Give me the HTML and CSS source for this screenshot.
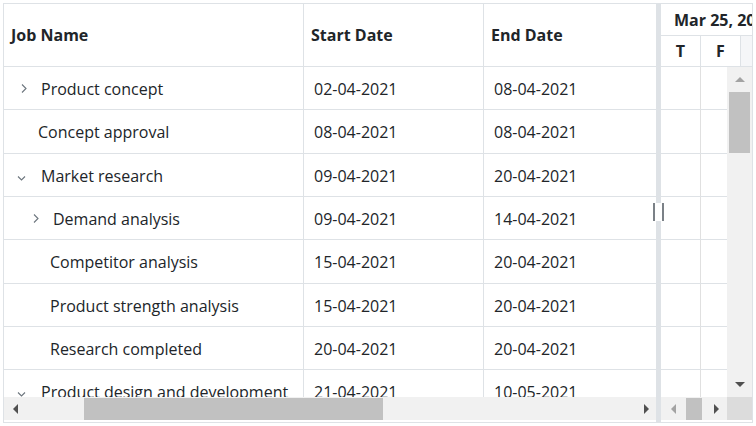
FILE: index.html
```html
<!DOCTYPE html>
<html lang="en">
<head>
<meta charset="utf-8">
<title>Gantt</title>
<link rel="stylesheet" href="styles.css">
</head>
<body>
<div class="gantt">
  <div class="grid-pane">
    <div class="grid-header">
      <div class="hcell col-name">Job Name</div>
      <div class="hcell col-start">Start Date</div>
      <div class="hcell col-end">End Date</div>
    </div>
    <div class="grid-body">
      <div class="row">
        <div class="cell col-name"><span class="exp"><svg width="16" height="16" viewBox="0 0 16 16"><polyline class="chev" points="7,3.5 11,7.5 7,11.5"/></svg></span><span>Product concept</span></div>
        <div class="cell col-start">02-04-2021</div>
        <div class="cell col-end">08-04-2021</div>
      </div>
      <div class="row">
        <div class="cell col-name"><span class="leaf"></span><span>Concept approval</span></div>
        <div class="cell col-start">08-04-2021</div>
        <div class="cell col-end">08-04-2021</div>
      </div>
      <div class="row">
        <div class="cell col-name"><span class="exp"><svg width="16" height="16" viewBox="0 0 16 16"><polyline class="chev" points="3,8.5 6.5,12 10,8.5"/></svg></span><span>Market research</span></div>
        <div class="cell col-start">09-04-2021</div>
        <div class="cell col-end">20-04-2021</div>
      </div>
      <div class="row">
        <div class="cell col-name"><span class="exp lvl1"><svg width="16" height="16" viewBox="0 0 16 16"><polyline class="chev" points="7,3.5 11,7.5 7,11.5"/></svg></span><span>Demand analysis</span></div>
        <div class="cell col-start">09-04-2021</div>
        <div class="cell col-end">14-04-2021</div>
      </div>
      <div class="row">
        <div class="cell col-name"><span class="leaf lvl1"></span><span>Competitor analysis</span></div>
        <div class="cell col-start">15-04-2021</div>
        <div class="cell col-end">20-04-2021</div>
      </div>
      <div class="row">
        <div class="cell col-name"><span class="leaf lvl1"></span><span>Product strength analysis</span></div>
        <div class="cell col-start">15-04-2021</div>
        <div class="cell col-end">20-04-2021</div>
      </div>
      <div class="row">
        <div class="cell col-name"><span class="leaf lvl1"></span><span>Research completed</span></div>
        <div class="cell col-start">20-04-2021</div>
        <div class="cell col-end">20-04-2021</div>
      </div>
      <div class="row">
        <div class="cell col-name"><span class="exp"><svg width="16" height="16" viewBox="0 0 16 16"><polyline class="chev" points="3,8.5 6.5,12 10,8.5"/></svg></span><span>Product design and development</span></div>
        <div class="cell col-start">21-04-2021</div>
        <div class="cell col-end">10-05-2021</div>
      </div>
    </div>
    <div class="hscroll">
      <div class="sbtn btn-l"><span class="tri tri-left dark"></span></div>
      <div class="hthumb grid-thumb"></div>
      <div class="sfill"></div>
      <div class="sbtn btn-r"><span class="tri tri-right dark"></span></div>
    </div>
  </div>

  <div class="splitter"><div class="handle"></div></div>

  <div class="chart-pane">
    <div class="chart-header">
      <div class="tl-top">Mar 25, 2021</div>
      <div class="tl-days">
        <div class="day">T</div>
        <div class="day">F</div>
        <div class="day weekend">S</div>
      </div>
    </div>
    <div class="chart-main">
      <div class="chart-body">
        <div class="crow"><div class="ccell"></div><div class="ccell"></div><div class="ccell"></div></div>
        <div class="crow"><div class="ccell"></div><div class="ccell"></div><div class="ccell"></div></div>
        <div class="crow"><div class="ccell"></div><div class="ccell"></div><div class="ccell"></div></div>
        <div class="crow"><div class="ccell"></div><div class="ccell"></div><div class="ccell"></div></div>
        <div class="crow"><div class="ccell"></div><div class="ccell"></div><div class="ccell"></div></div>
        <div class="crow"><div class="ccell"></div><div class="ccell"></div><div class="ccell"></div></div>
        <div class="crow"><div class="ccell"></div><div class="ccell"></div><div class="ccell"></div></div>
        <div class="crow"><div class="ccell"></div><div class="ccell"></div><div class="ccell"></div></div>
      </div>
      <div class="vscroll">
        <div class="vbtn"><span class="tri tri-up light"></span></div>
        <div class="vthumb"></div>
        <div class="sfill"></div>
        <div class="vbtn"><span class="tri tri-down dark"></span></div>
      </div>
    </div>
    <div class="chart-bottom">
      <div class="hscroll chart-hscroll">
        <div class="sbtn cbtn-l"><span class="tri tri-left light"></span></div>
        <div class="hthumb chart-thumb"></div>
        <div class="sfill"></div>
        <div class="sbtn cbtn-r"><span class="tri tri-right dark"></span></div>
      </div>
      <div class="corner"></div>
    </div>
  </div>
</div>
</body>
</html>
```

FILE: styles.css
```css
html, body {
  background: #ffffff;
}

body {
  margin: 3px;
  font-family: "Open Sans", "Segoe UI", sans-serif;
  font-size: 16px;
  color: #212529;
}

.gantt {
  display: flex;
  width: 750px;
  height: 420px;
  box-sizing: border-box;
  border: 1px solid #dee2e6;
  overflow: hidden;
}

/* ---------- grid side ---------- */
.grid-pane {
  width: 652px;
  flex: none;
  display: flex;
  flex-direction: column;
}

.grid-header {
  display: flex;
  height: 63px;
  flex: none;
  box-sizing: border-box;
  border-bottom: 1px solid #dee2e6;
}

.hcell {
  display: flex;
  align-items: center;
  box-sizing: border-box;
  padding-left: 7px;
  font-weight: 700;
  border-right: 1px solid #dee2e6;
  white-space: nowrap;
}

.col-name { width: 300px; flex: none; }
.col-start { width: 180px; flex: none; }
.col-end { width: 172px; flex: none; border-right: none; }

.grid-body {
  height: 330px;
  flex: none;
  overflow: hidden;
}

.row {
  display: flex;
  height: 43.34px;
  box-sizing: border-box;
  border-bottom: 1px solid #dee2e6;
}

.cell {
  display: flex;
  align-items: center;
  box-sizing: border-box;
  padding-left: 10px;
  padding-top: 2px;
  border-right: 1px solid #dee2e6;
  white-space: nowrap;
  overflow: hidden;
}

.cell.col-end { border-right: none; }
.cell.col-name { padding-left: 7px; }

.exp {
  width: 30px;
  flex: none;
  display: flex;
  align-items: center;
}

.exp svg {
  margin-left: 4px;
  display: block;
}

.leaf {
  width: 27px;
  flex: none;
}

.lvl1 { margin-left: 12px; }

.chev {
  fill: none;
  stroke: #6c757d;
  stroke-width: 1.1;
}

/* ---------- splitter ---------- */
.splitter {
  width: 5px;
  flex: none;
  background: #dee2e6;
  position: relative;
}

.handle {
  position: absolute;
  left: -3px;
  top: 199px;
  width: 11px;
  height: 18px;
  box-sizing: border-box;
  background: #ffffff;
  border-left: 2px solid #7b8187;
  border-right: 2px solid #7b8187;
}

/* ---------- chart side ---------- */
.chart-pane {
  width: 91px;
  flex: none;
  display: flex;
  flex-direction: column;
  overflow: hidden;
}

.chart-header {
  height: 63px;
  flex: none;
  box-sizing: border-box;
  border-bottom: 1px solid #dee2e6;
}

.tl-top {
  height: 32px;
  box-sizing: border-box;
  border-bottom: 1px solid #dee2e6;
  display: flex;
  align-items: center;
  padding-left: 13px;
  font-weight: 700;
  white-space: nowrap;
  overflow: hidden;
}

.tl-days {
  height: 30px;
  display: flex;
}

.day {
  width: 40px;
  flex: none;
  box-sizing: border-box;
  border-right: 1px solid #dee2e6;
  display: flex;
  align-items: center;
  justify-content: center;
  font-weight: 700;
}

.day.weekend {
  background: #f5f6f8;
  color: #f5f6f8;
}

.chart-main {
  display: flex;
  height: 330px;
  flex: none;
}

.chart-body {
  width: 66px;
  flex: none;
  overflow: hidden;
}

.crow {
  display: flex;
  height: 43.34px;
  box-sizing: border-box;
  border-bottom: 1px solid #dee2e6;
}

.ccell {
  width: 40px;
  flex: none;
  box-sizing: border-box;
  border-right: 1px solid #e0e0e0;
}

/* ---------- scrollbars ---------- */
.hscroll {
  display: flex;
  height: 23px;
  flex: none;
  background: #f1f1f1;
}

.sbtn {
  flex: none;
  display: flex;
  align-items: center;
  justify-content: center;
}

.btn-l { width: 23px; }
.btn-r { width: 20px; }
.cbtn-l { width: 24px; }
.cbtn-r { width: 22px; }

.sfill { flex: 1; }

.hthumb {
  flex: none;
  margin-top: 1px;
  height: 22px;
  background: #c1c1c1;
}

.grid-thumb {
  margin-left: 57px;
  width: 299px;
}

.chart-thumb {
  margin-left: 1px;
  width: 16px;
}

.tri {
  display: block;
  width: 0;
  height: 0;
}

.tri-left {
  border-top: 5px solid transparent;
  border-bottom: 5px solid transparent;
  border-right: 5px solid currentColor;
}

.tri-right {
  border-top: 5px solid transparent;
  border-bottom: 5px solid transparent;
  border-left: 5px solid currentColor;
}

.tri-up {
  border-left: 5px solid transparent;
  border-right: 5px solid transparent;
  border-bottom: 5px solid currentColor;
}

.tri-down {
  border-left: 5px solid transparent;
  border-right: 5px solid transparent;
  border-top: 5px solid currentColor;
}

.dark { color: #505050; }
.light { color: #a3a3a3; }

.vscroll {
  width: 25px;
  flex: none;
  display: flex;
  flex-direction: column;
  background: #f1f1f1;
}

.vbtn {
  height: 25px;
  flex: none;
  display: flex;
  align-items: center;
  justify-content: center;
}

.vthumb {
  margin-left: 2px;
  width: 21px;
  height: 61px;
  flex: none;
  background: #c1c1c1;
}

.chart-bottom {
  display: flex;
  height: 23px;
  flex: none;
}

.chart-hscroll {
  width: 66px;
}

.corner {
  width: 25px;
  flex: none;
  background: #dcdcdc;
}
```
